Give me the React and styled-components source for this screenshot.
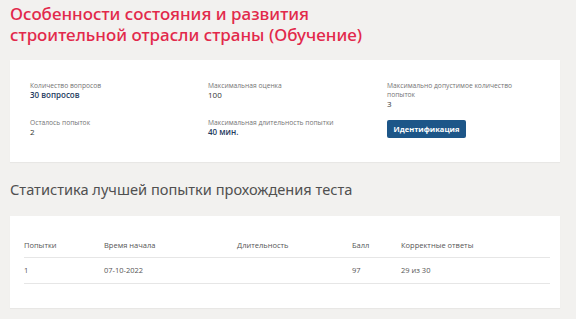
import React from 'react';
import styled, { createGlobalStyle } from 'styled-components';

const GlobalStyle = createGlobalStyle`
    html, body {
        margin: 0;
        padding: 0;
        background-color: #f2f1ef;
    }
    * {
        box-sizing: border-box;
    }
`;

const info = [
    { label: 'Количество вопросов', value: '30 вопросов', accent: true },
    { label: 'Максимальная оценка', value: '100' },
    { label: 'Максимально допустимое количество попыток', value: '3' },
    { label: 'Осталось попыток', value: '2' },
    { label: 'Максимальная длительность попытки', value: '40 мин.', accent: true },
];

const columns = ['Попытки', 'Время начала', 'Длительность', 'Балл', 'Корректные ответы'];
const rows = [['1', '07-10-2022', '', '97', '29 из 30']];

function App() {
    return (
        <StPage>
            <GlobalStyle />
            <StTitle>
                <span>Особенности состояния и развития</span>
                <span>строительной отрасли страны (Обучение)</span>
            </StTitle>
            <StInfoCard>
                <StInfoGrid>
                    {info.map((item) => (
                        <StInfoItem key={item.label}>
                            <StLabel>{item.label}</StLabel>
                            <StValue $accent={item.accent}>{item.value}</StValue>
                        </StInfoItem>
                    ))}
                    <StInfoItem>
                        <StButton>Идентификация</StButton>
                    </StInfoItem>
                </StInfoGrid>
            </StInfoCard>
            <StSubTitle>Статистика лучшей попытки прохождения теста</StSubTitle>
            <StTableCard>
                <StTable>
                    <thead>
                        <tr>
                            {columns.map((c) => (
                                <StTh key={c}>{c}</StTh>
                            ))}
                        </tr>
                    </thead>
                    <tbody>
                        {rows.map((r, i) => (
                            <tr key={i}>
                                {r.map((cell, j) => (
                                    <StTd key={j}>{cell}</StTd>
                                ))}
                            </tr>
                        ))}
                    </tbody>
                </StTable>
            </StTableCard>
        </StPage>
    );
}

const StPage = styled.div`
    width: 576px;
    padding: 3px 16px 10px 10px;
    font-family: 'Open Sans', 'Liberation Sans', sans-serif;
`;
const StTitle = styled.h1`
    margin: 0;
    display: flex;
    flex-direction: column;
    font-family: 'Noto Sans', 'Liberation Sans', sans-serif;
    font-size: 17px;
    font-weight: 500;
    line-height: 21px;
    color: #e2294b;
`;
const StInfoCard = styled.div`
    margin-top: 15px;
    background-color: #ffffff;
    height: 102px;
    padding: 21px 20px 0 20px;
    box-shadow: 0 1px 1px rgba(0, 0, 0, 0.04);
`;
const StInfoGrid = styled.div`
    display: grid;
    grid-template-columns: 178px 179px 1fr;
    grid-template-rows: 37px auto;
`;
const StInfoItem = styled.div`
    display: flex;
    flex-direction: column;
    padding-right: 20px;
`;
const StLabel = styled.div`
    font-size: 6.7px;
    line-height: 9px;
    color: #737373;
`;
const StValue = styled.div`
    font-size: 8px;
    line-height: 10px;
    color: ${(p) => (p.$accent ? '#243b5e' : '#333333')};
    font-weight: ${(p) => (p.$accent ? 600 : 400)};
`;
const StButton = styled.button`
    align-self: flex-start;
    margin-top: 2px;
    width: 79px;
    height: 18px;
    border: none;
    border-radius: 2px;
    background-color: #1d5688;
    color: #ffffff;
    font-family: 'Open Sans', 'Liberation Sans', sans-serif;
    font-size: 7.5px;
    font-weight: 700;
    padding: 0;
`;
const StSubTitle = styled.h2`
    margin: 17px 0 0 0;
    font-family: 'Noto Sans', 'Liberation Sans', sans-serif;
    font-size: 14.6px;
    font-weight: 400;
    line-height: 20px;
    color: #505050;
`;
const StTableCard = styled.div`
    margin-top: 17px;
    background-color: #ffffff;
    height: 92px;
    padding: 18px 10px 0 14px;
    box-shadow: 0 1px 1px rgba(0, 0, 0, 0.04);
`;
const StTable = styled.table`
    width: 526px;
    border-collapse: collapse;
    font-size: 7.5px;
    color: #555555;
`;
const StTh = styled.th`
    text-align: left;
    font-weight: 400;
    height: 23px;
    border-bottom: 1.5px solid #e6e6e6;
    padding: 0;
    &:nth-child(1) { width: 80px; }
    &:nth-child(2) { width: 133px; }
    &:nth-child(3) { width: 115px; }
    &:nth-child(4) { width: 49px; }
`;
const StTd = styled.td`
    height: 26px;
    border-bottom: 1.5px solid #e6e6e6;
    padding: 0;
`;

export default App;
